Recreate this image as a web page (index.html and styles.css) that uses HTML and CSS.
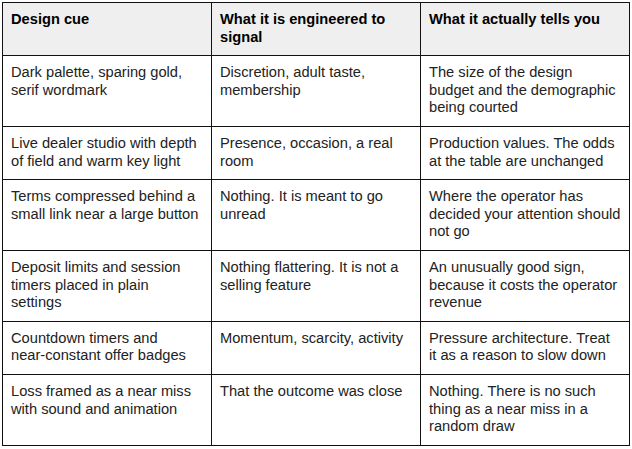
FILE: index.html
```html
<!DOCTYPE html>
<html lang="en">
<head>
<meta charset="utf-8">
<title>Design cues</title>
<link rel="stylesheet" href="styles.css">
</head>
<body>
<table class="cues">
  <colgroup><col class="c1"><col class="c2"><col class="c3"></colgroup>
  <thead>
    <tr>
      <th>Design cue</th>
      <th>What it is engineered to<br>signal</th>
      <th>What it actually tells you</th>
    </tr>
  </thead>
  <tbody>
    <tr>
      <td>Dark palette, sparing gold,<br>serif wordmark</td>
      <td>Discretion, adult taste,<br>membership</td>
      <td>The size of the design<br>budget and the demographic<br>being courted</td>
    </tr>
    <tr>
      <td>Live dealer studio with depth<br>of field and warm key light</td>
      <td>Presence, occasion, a real<br>room</td>
      <td>Production values. The odds<br>at the table are unchanged</td>
    </tr>
    <tr>
      <td>Terms compressed behind a<br>small link near a large button</td>
      <td>Nothing. It is meant to go<br>unread</td>
      <td>Where the operator has<br>decided your attention should<br>not go</td>
    </tr>
    <tr>
      <td>Deposit limits and session<br>timers placed in plain<br>settings</td>
      <td>Nothing flattering. It is not a<br>selling feature</td>
      <td>An unusually good sign,<br>because it costs the operator<br>revenue</td>
    </tr>
    <tr>
      <td>Countdown timers and<br>near-constant offer badges</td>
      <td>Momentum, scarcity, activity</td>
      <td>Pressure architecture. Treat<br>it as a reason to slow down</td>
    </tr>
    <tr>
      <td>Loss framed as a near miss<br>with sound and animation</td>
      <td>That the outcome was close</td>
      <td>Nothing. There is no such<br>thing as a near miss in a<br>random draw</td>
    </tr>
  </tbody>
</table>
</body>
</html>
```
FILE: styles.css
```css
html, body {
  background: #ffffff;
}
body {
  margin: 2px;
  font-family: "Liberation Sans", Arial, sans-serif;
  font-size: 14.67px;
  line-height: 17.6px;
  color: #222222;
}
.cues {
  border-collapse: collapse;
  table-layout: fixed;
  width: 628px;
}
.cues col {
  width: 209px;
}
.cues th,
.cues td {
  border: 1px solid #111111;
  padding: 8px 7px 9px 8px;
  text-align: left;
  vertical-align: top;
  white-space: nowrap;
}
.cues th {
  background: #efefef;
  color: #000000;
  font-weight: bold;
}
```
